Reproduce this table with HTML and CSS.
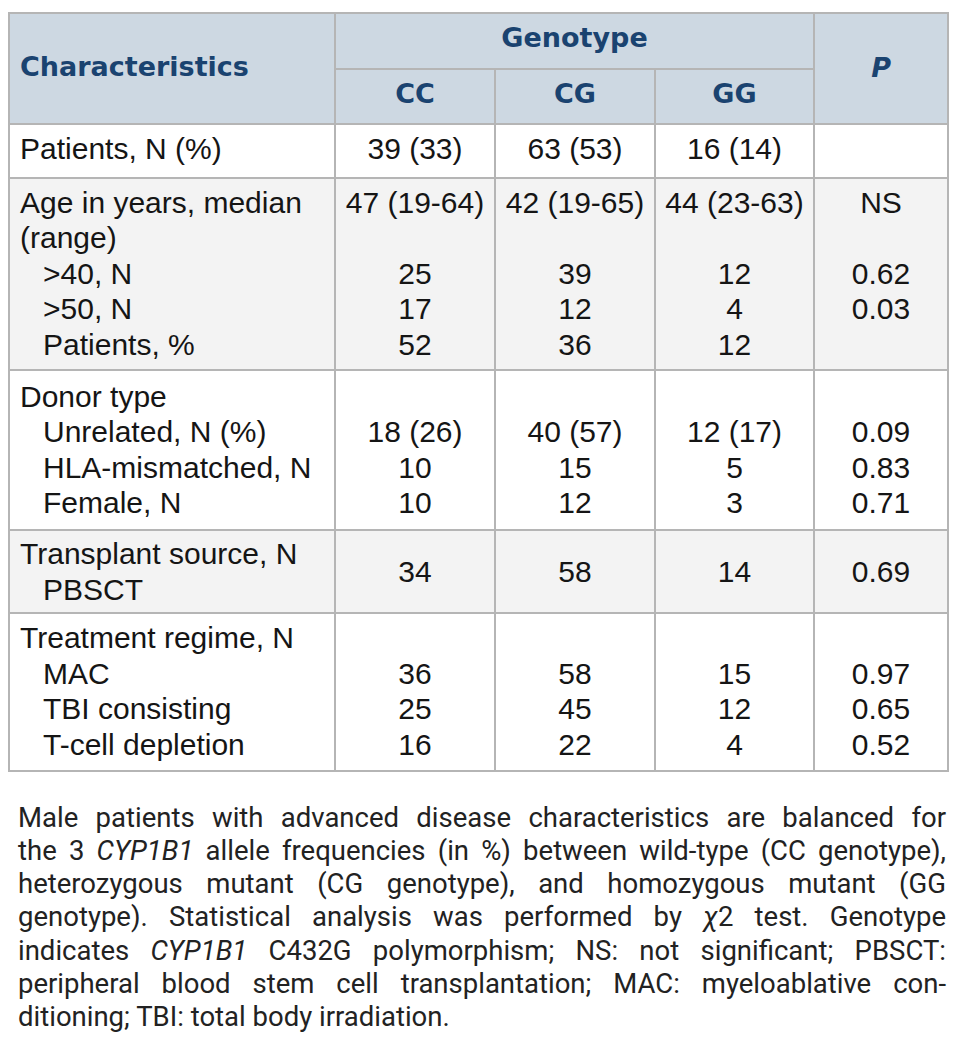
FILE: index.html
```html
<!DOCTYPE html>
<html lang="en">
<head>
<meta charset="utf-8">
<title>CYP1B1 genotype characteristics</title>
<link rel="stylesheet" href="styles.css">
</head>
<body>
<div class="page">
  <table class="tbl">
    <colgroup>
      <col class="c-label">
      <col class="c-num">
      <col class="c-num">
      <col class="c-num2">
      <col class="c-p">
    </colgroup>
    <thead>
      <tr>
        <th rowspan="2" class="h-char">Characteristics</th>
        <th colspan="3" class="h-geno">Genotype</th>
        <th rowspan="2" class="h-p"><i>P</i></th>
      </tr>
      <tr>
        <th class="h-sub">CC</th>
        <th class="h-sub">CG</th>
        <th class="h-sub">GG</th>
      </tr>
    </thead>
    <tbody>
      <tr class="r-patients">
        <td class="lbl"><div class="ln">Patients, N (%)</div></td>
        <td><div class="ln">39 (33)</div></td>
        <td><div class="ln">63 (53)</div></td>
        <td><div class="ln">16 (14)</div></td>
        <td><div class="ln">&nbsp;</div></td>
      </tr>
      <tr class="r-age alt">
        <td class="lbl">
          <div class="ln">Age in years, median</div>
          <div class="ln">(range)</div>
          <div class="ln sub">&gt;40, N</div>
          <div class="ln sub">&gt;50, N</div>
          <div class="ln sub">Patients, %</div>
        </td>
        <td>
          <div class="ln">47 (19-64)</div>
          <div class="ln">&nbsp;</div>
          <div class="ln">25</div>
          <div class="ln">17</div>
          <div class="ln">52</div>
        </td>
        <td>
          <div class="ln">42 (19-65)</div>
          <div class="ln">&nbsp;</div>
          <div class="ln">39</div>
          <div class="ln">12</div>
          <div class="ln">36</div>
        </td>
        <td>
          <div class="ln">44 (23-63)</div>
          <div class="ln">&nbsp;</div>
          <div class="ln">12</div>
          <div class="ln">4</div>
          <div class="ln">12</div>
        </td>
        <td>
          <div class="ln">NS</div>
          <div class="ln">&nbsp;</div>
          <div class="ln">0.62</div>
          <div class="ln">0.03</div>
          <div class="ln">&nbsp;</div>
        </td>
      </tr>
      <tr class="r-donor">
        <td class="lbl">
          <div class="ln">Donor type</div>
          <div class="ln sub">Unrelated, N (%)</div>
          <div class="ln sub">HLA-mismatched, N</div>
          <div class="ln sub">Female, N</div>
        </td>
        <td>
          <div class="ln">&nbsp;</div>
          <div class="ln">18 (26)</div>
          <div class="ln">10</div>
          <div class="ln">10</div>
        </td>
        <td>
          <div class="ln">&nbsp;</div>
          <div class="ln">40 (57)</div>
          <div class="ln">15</div>
          <div class="ln">12</div>
        </td>
        <td>
          <div class="ln">&nbsp;</div>
          <div class="ln">12 (17)</div>
          <div class="ln">5</div>
          <div class="ln">3</div>
        </td>
        <td>
          <div class="ln">&nbsp;</div>
          <div class="ln">0.09</div>
          <div class="ln">0.83</div>
          <div class="ln">0.71</div>
        </td>
      </tr>
      <tr class="r-transplant alt">
        <td class="lbl">
          <div class="ln">Transplant source, N</div>
          <div class="ln sub">PBSCT</div>
        </td>
        <td class="mid"><div class="ln">34</div></td>
        <td class="mid"><div class="ln">58</div></td>
        <td class="mid"><div class="ln">14</div></td>
        <td class="mid"><div class="ln">0.69</div></td>
      </tr>
      <tr class="r-treat">
        <td class="lbl">
          <div class="ln">Treatment regime, N</div>
          <div class="ln sub">MAC</div>
          <div class="ln sub">TBI consisting</div>
          <div class="ln sub">T-cell depletion</div>
        </td>
        <td>
          <div class="ln">&nbsp;</div>
          <div class="ln">36</div>
          <div class="ln">25</div>
          <div class="ln">16</div>
        </td>
        <td>
          <div class="ln">&nbsp;</div>
          <div class="ln">58</div>
          <div class="ln">45</div>
          <div class="ln">22</div>
        </td>
        <td>
          <div class="ln">&nbsp;</div>
          <div class="ln">15</div>
          <div class="ln">12</div>
          <div class="ln">4</div>
        </td>
        <td>
          <div class="ln">&nbsp;</div>
          <div class="ln">0.97</div>
          <div class="ln">0.65</div>
          <div class="ln">0.52</div>
        </td>
      </tr>
    </tbody>
  </table>

  <div class="caption">
    <span class="cl">Male patients with advanced disease characteristics are balanced for</span>
    <span class="cl">the 3 <i>CYP1B1</i> allele frequencies (in %) between wild-type (CC genotype),</span>
    <span class="cl">heterozygous mutant (CG genotype), and homozygous mutant (GG</span>
    <span class="cl">genotype). Statistical analysis was performed by <i>χ</i>2 test. Genotype</span>
    <span class="cl">indicates <i>CYP1B1</i> C432G polymorphism; NS: not significant; PBSCT:</span>
    <span class="cl">peripheral blood stem cell transplantation; MAC: myeloablative con-</span>
    <span class="cl last">ditioning; TBI: total body irradiation.</span>
  </div>
</div>
</body>
</html>
```

FILE: styles.css
```css
html, body {
  margin: 0;
  padding: 0;
  background: #ffffff;
}

.page {
  padding: 12px 0 0 8px;
}

.tbl {
  border-collapse: collapse;
  table-layout: fixed;
  width: 939px;
  font-family: "Liberation Sans", Arial, sans-serif;
  font-size: 30px;
  color: #151515;
}

.c-label { width: 326px; }
.c-num { width: 160px; }
.c-num2 { width: 159px; }
.c-p { width: 134px; }

.tbl th,
.tbl td {
  border: 2px solid #b5b5b5;
}

.tbl th {
  background: #cdd8e2;
  color: #1a4370;
  font-family: "DejaVu Sans", sans-serif;
  font-weight: bold;
  font-size: 27px;
  line-height: 32px;
  vertical-align: middle;
  text-align: center;
}

.tbl th i {
  font-style: italic;
}

.h-char {
  text-align: left !important;
  padding: 0 10px 4px;
}

.h-geno {
  padding: 8px 0 14px;
}

.h-sub {
  padding: 8px 0 13px;
}

.h-p {
  padding: 0 0 2px;
}

.tbl td {
  padding: 7px 0 7px;
  vertical-align: top;
  text-align: center;
  line-height: 35.6px;
  white-space: nowrap;
}

.tbl td.lbl {
  text-align: left;
  padding-left: 10px;
}

.ln.sub {
  padding-left: 23px;
}

.alt td {
  background: #f3f3f3;
}

.r-patients td { padding-top: 6px; padding-bottom: 10px; }
.r-age td { padding-top: 6px; padding-bottom: 6px; }
.r-donor td { padding-top: 8px; padding-bottom: 8px; }
.r-transplant td { padding-top: 5px; padding-bottom: 5px; }
.r-treat td { padding-top: 6px; padding-bottom: 7px; }

.tbl td.mid {
  vertical-align: middle;
}

.caption {
  width: 928px;
  margin: 29px 0 0 10px;
  font-family: Roboto, "Liberation Sans", sans-serif;
  font-size: 27.5px;
  line-height: 33.3px;
  color: #222222;
}

.cl {
  display: block;
  text-align: justify;
  text-align-last: justify;
}

.cl.last {
  text-align: left;
  text-align-last: left;
}
```
